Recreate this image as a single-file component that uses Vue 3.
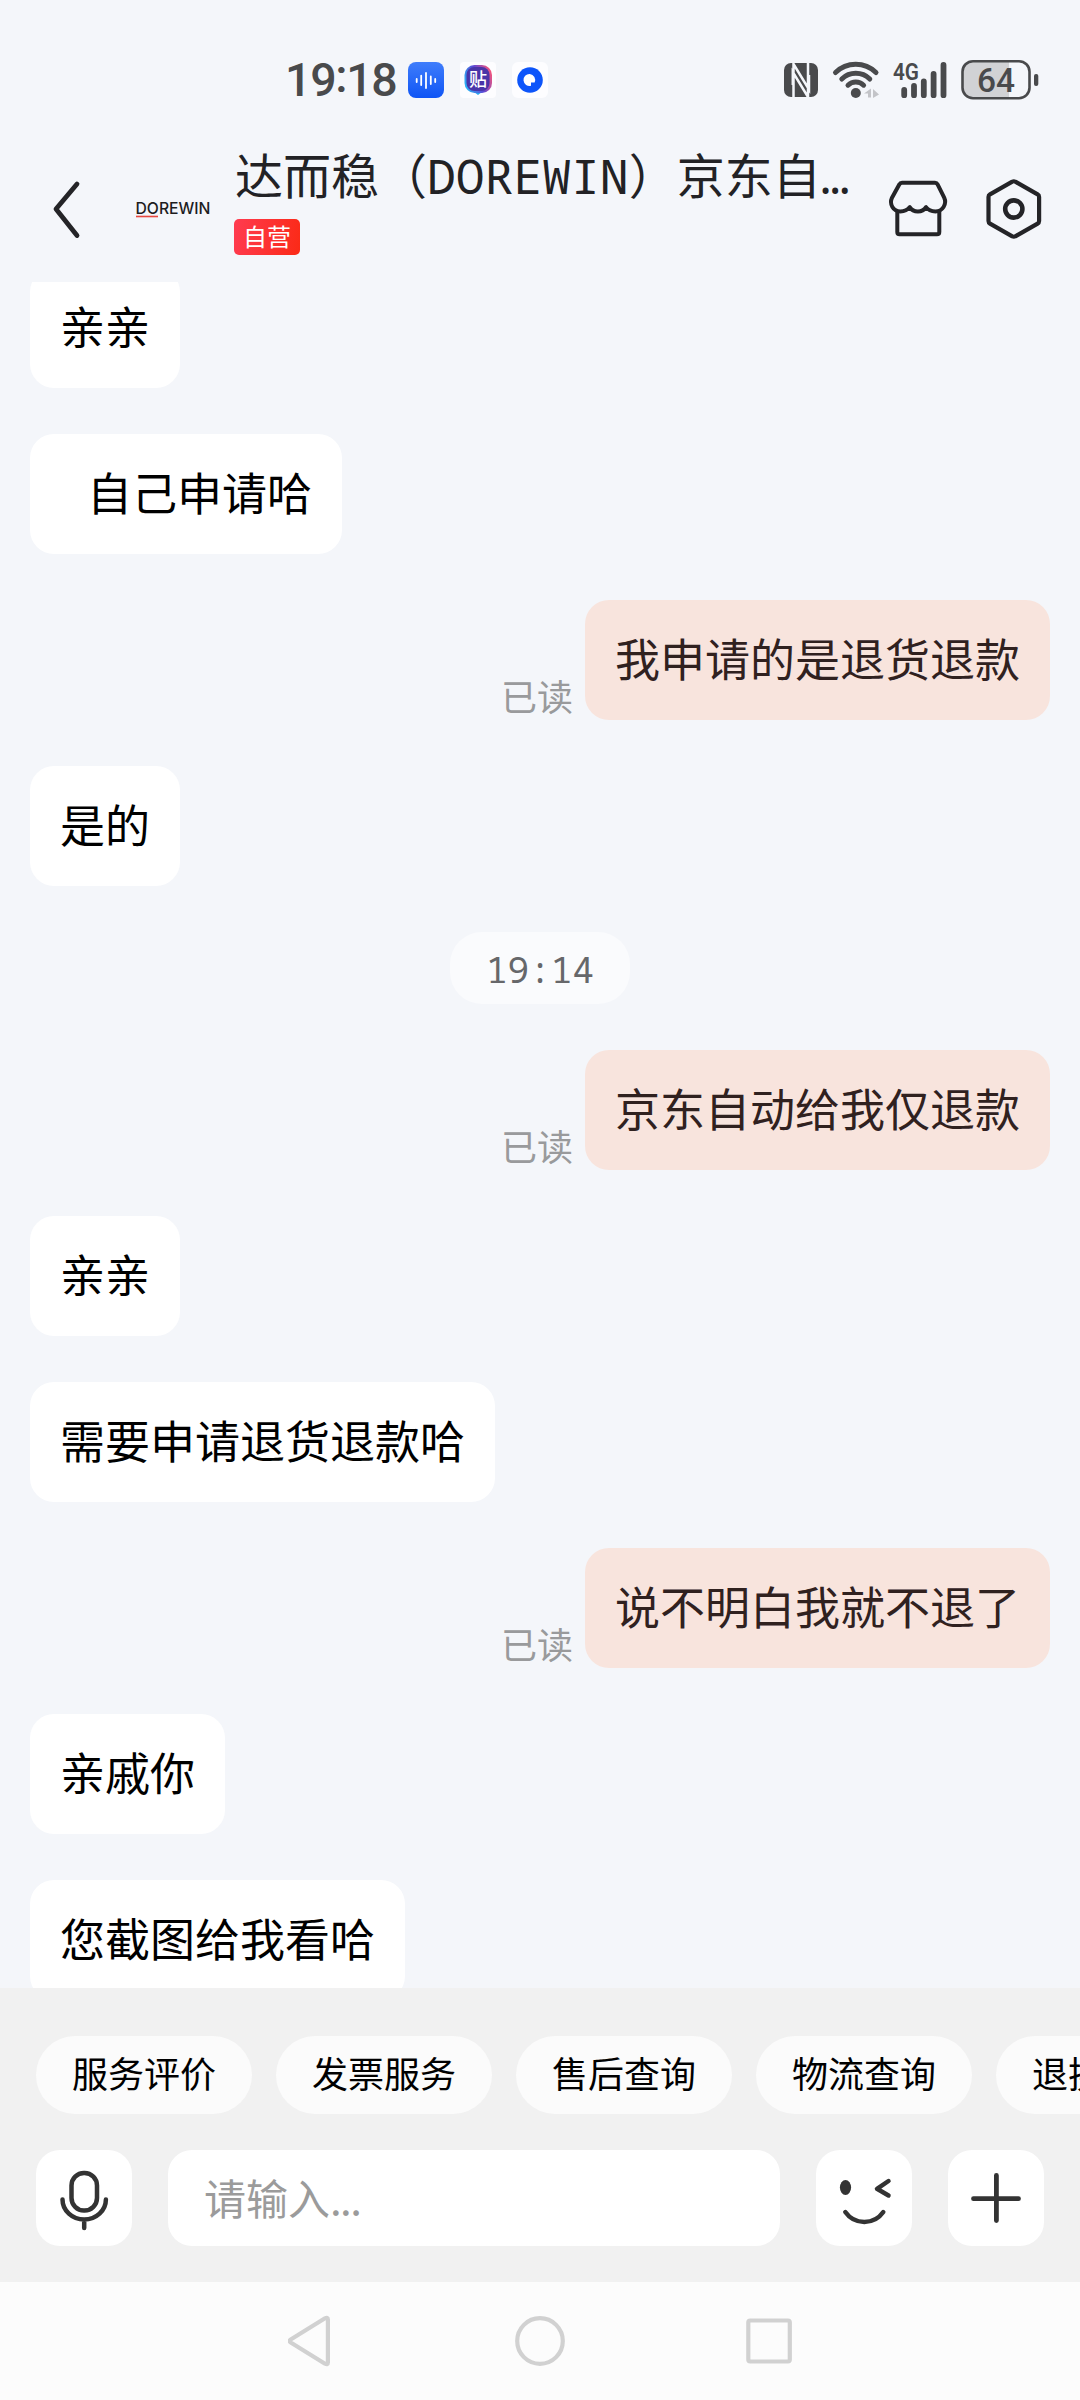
<script setup>
const messages = [
  { id: 1, from: 'peer', text: '亲亲' },
  { id: 2, from: 'peer', text: '自己申请哈', indent: true },
  { id: 3, from: 'me', text: '我申请的是退货退款' },
  { id: 4, from: 'peer', text: '是的' },
  { id: 5, from: 'time', text: '19:14' },
  { id: 6, from: 'me', text: '京东自动给我仅退款' },
  { id: 7, from: 'peer', text: '亲亲' },
  { id: 8, from: 'peer', text: '需要申请退货退款哈' },
  { id: 9, from: 'me', text: '说不明白我就不退了' },
  { id: 10, from: 'peer', text: '亲戚你' },
  { id: 11, from: 'peer', text: '您截图给我看哈' },
]
const chips = ['服务评价', '发票服务', '售后查询', '物流查询', '退换货']
</script>

<template>
  <div class="screen">
    <div class="status">
      <div class="status-left">
        <span class="clock">19<i class="colon">:</i>18</span>
        <svg class="app" width="36" height="36" viewBox="0 0 36 36">
          <defs>
            <linearGradient id="voice" x1="0" y1="0" x2="0" y2="1">
              <stop offset="0" stop-color="#3f7dfb" />
              <stop offset="1" stop-color="#0f55f5" />
            </linearGradient>
          </defs>
          <rect width="36" height="36" rx="8" fill="url(#voice)" />
          <g stroke="#fff" stroke-width="1.8" stroke-linecap="round">
            <path d="M8.7 17v3M13.2 13.7v9.3M18 11v15M22.8 14.5v7.5M27.2 17v3" />
          </g>
        </svg>
        <svg class="app" width="36" height="36" viewBox="0 0 36 36">
          <defs>
            <linearGradient id="tie" x1="0" y1="0.7" x2="1" y2="0.3">
              <stop offset="0" stop-color="#2bb4f5" />
              <stop offset="0.5" stop-color="#5a49d6" />
              <stop offset="1" stop-color="#f5557c" />
            </linearGradient>
          </defs>
          <rect width="36" height="36" rx="4" fill="#fdfdff" />
          <path d="M14 30l4 3 4-3z" fill="#2aa5ee" />
          <rect x="4.5" y="3" width="27.5" height="28" rx="10" fill="url(#tie)" />
          <rect x="6.5" y="5" width="23" height="24" rx="8" fill="#4a35a8" />
          <text x="18" y="24" text-anchor="middle" class="tie-text">贴</text>
        </svg>
        <svg class="app" width="36" height="36" viewBox="0 0 36 36">
          <rect width="36" height="36" rx="6" fill="#fdfdff" />
          <circle cx="18" cy="18" r="12.8" fill="#0d55fa" />
          <path d="M17.8 12a6 6 0 1 0 1.2 11.8v-3.3h3.6a6 6 0 0 0-4.8-8.5z" fill="#fff" />
        </svg>
      </div>
      <svg class="status-right" width="270" height="46" viewBox="776 56 270 46">
        <rect x="784" y="62" width="34" height="34" rx="7" fill="#494a4c" />
        <path d="M793.5 97V63L809 88.5V74M808 61v35L792.8 71V84" fill="none" stroke="#f4f6fa" stroke-width="2.5" />
        <g fill="none" stroke="#494a4c" stroke-width="5" stroke-linecap="round">
          <path d="M835.5 71.5a29 29 0 0 1 40.5 0" />
          <path d="M841.8 78a20 20 0 0 1 28 0" />
          <path d="M848 84.2a11.3 11.3 0 0 1 15.6 0" />
        </g>
        <circle cx="855.8" cy="92" r="5" fill="#494a4c" />
        <path d="M864 92.5l7-5v9h-3v-4zM873 88l6 5.5-6 3.5z" fill="#c3c4c8" />
        <text x="893" y="78.5" class="net" textLength="26" lengthAdjust="spacingAndGlyphs">4G</text>
        <g stroke="#494a4c" stroke-width="5.8" stroke-linecap="round">
          <path d="M904.2 89v5.2M914 85v9.2M923.8 80.5v13.7M933.6 73v21.2M943.5 64v30.2" />
        </g>
        <path d="M973 60h36v37h-36a10 10 0 0 1-10-10V70a10 10 0 0 1 10-10z" fill="#d1d2d5" />
        <rect x="962.5" y="60.2" width="67" height="37" rx="10.5" fill="none" stroke="#494a4c" stroke-width="2.6" />
        <rect x="1034" y="73" width="4.3" height="12" rx="2" fill="#494a4c" />
        <text x="977" y="91" class="level" textLength="38" lengthAdjust="spacingAndGlyphs">64</text>
      </svg>
    </div>

    <header class="header">
      <svg class="back" width="34" height="64" viewBox="50 177 34 64">
        <path d="M77 184L56 209l21 26.5" fill="none" stroke="#242427" stroke-width="4.8" stroke-linecap="round" stroke-linejoin="round" />
      </svg>
      <div class="brand">
        <svg width="90" height="30" viewBox="130 194 90 30">
          <text x="135.5" y="213.8" class="brand-text" textLength="75" lengthAdjust="spacingAndGlyphs">DOREWIN</text>
          <path d="M136 216.5h22" stroke="#e8473f" stroke-width="1.6" />
        </svg>
      </div>
      <div class="shop">
        <div class="title">达而稳（<span class="latin">DOREWIN</span>）京东自<span class="latin">…</span></div>
        <div class="tag">自营</div>
      </div>
      <svg class="actions" width="160" height="66" viewBox="884 176 160 66">
        <g fill="none" stroke="#242427" stroke-width="4" stroke-linejoin="round" stroke-linecap="round">
          <path d="M902 182.7h33q1.8 0 2.6 1.6l6.6 13.4c3 6.5-1.8 13.8-8.7 13.8-4 0-7.5-1.5-9.5-4.3-1.8 2.800-4.500 4.300-8.100 4.300s-6.400-1.500-8.200-4.300c-2 2.800-5.400 4.300-9.400 4.300-7 0-11.300-7.300-8.300-13.800l7.400-13.400q.8-1.600 2.600-1.600z" />
          <path d="M897.300 212v20q0 2.300 2.300 2.300h37.400q2.300 0 2.300-2.300v-20" />
          <path d="M1012.3 181.700q1.500-.9 3 0l22.300 12.600q1.500.9 1.500 2.600v24.200q0 1.700-1.500 2.600l-22.300 12.600q-1.500.9-3 0l-22.300-12.600q-1.500-.9-1.500-2.600v-24.200q0-1.700 1.500-2.600z" stroke-width="4.2" />
          <circle cx="1013.8" cy="209" r="8.6" stroke-width="4.6" />
        </g>
      </svg>
    </header>

    <main class="chat">
      <div v-for="m in messages" :key="m.id" class="row" :class="m.from">
        <span v-if="m.from === 'me'" class="read">已读</span>
        <div class="bubble" :class="{ indent: m.indent }">{{ m.text }}</div>
      </div>
    </main>

    <footer class="composer">
      <div class="chips">
        <div v-for="c in chips" :key="c" class="chip">{{ c }}</div>
      </div>
      <div class="tools">
        <div class="tool">
          <svg width="96" height="96" viewBox="36 2150 96 96" fill="none" stroke="#333" stroke-width="4.5" stroke-linecap="round">
            <rect x="71.5" y="2173" width="25.5" height="37.5" rx="12.5" />
            <path d="M62.5 2199.5a21.7 20 0 0 0 43.4 0M84.2 2220v8" />
          </svg>
        </div>
        <div class="field">请输入<span class="dots">...</span></div>
        <div class="tool">
          <svg width="96" height="96" viewBox="816 2150 96 96" fill="none" stroke="#333" stroke-width="4.5" stroke-linecap="round" stroke-linejoin="round">
            <ellipse cx="845.5" cy="2187.5" rx="5.6" ry="7.6" fill="#333" stroke="none" />
            <path d="M888.5 2181l-11.5 7.800 11.500 6.700M845.300 2212c9.200 13.200 28.800 13.200 38 0" />
          </svg>
        </div>
        <div class="tool">
          <svg width="96" height="96" viewBox="948 2150 96 96" fill="none" stroke="#333" stroke-width="4.8" stroke-linecap="round">
            <path d="M973.5 2198.7h45M996.4 2175.5v45" />
          </svg>
        </div>
      </div>
    </footer>

    <nav class="nav">
      <svg width="504" height="60" viewBox="288 2311 504 60" fill="none" stroke="#d1d1d1" stroke-width="4.2" stroke-linejoin="round">
        <path d="M290.3 2339.8q-1.5 1.2 0 2.4l34.7 21.500q2.900 1.500 2.900-1.200v-43q0-2.700-2.900-1.200z" />
        <circle cx="540" cy="2341" r="22.8" />
        <rect x="748.3" y="2320.5" width="41.5" height="41" rx="2" />
      </svg>
    </nav>
  </div>
</template>

<style>
body {
  margin: 0;
  background: #f4f6fa;
}
</style>

<style scoped>
.screen {
  width: 1080px;
  height: 2400px;
  display: flex;
  flex-direction: column;
  overflow: hidden;
  background: #f4f6fa;
  font-family: "Noto Sans CJK SC", sans-serif;
}
.screen svg {
  display: block;
  flex: none;
}
.status {
  height: 136px;
  box-sizing: border-box;
  padding: 24px 34px 0 285px;
  display: flex;
  align-items: center;
  justify-content: space-between;
}
.status-left {
  display: flex;
  align-items: center;
  gap: 16px;
}
.clock {
  width: 107px;
  white-space: nowrap;
  font: 500 46.5px/58px Roboto, sans-serif;
  letter-spacing: -1.3px;
  color: #494a4c;
}
.colon {
  font-style: normal;
  display: inline-block;
  transform: translateY(-4px);
}
.tie-text {
  font: 500 18px "Noto Sans CJK SC", sans-serif;
  fill: #fff;
}
.net {
  font: 600 24px Roboto, sans-serif;
  fill: #494a4c;
}
.level {
  font: 500 34px Roboto, sans-serif;
  fill: #494a4c;
}
.header {
  height: 146px;
  flex: none;
  box-sizing: border-box;
  padding-left: 50px;
  display: flex;
  align-items: center;
}
.brand {
  margin-left: 46px;
}
.brand-text {
  font: 500 16px Inter, sans-serif;
  fill: #1d1d1f;
}
.shop {
  align-self: flex-start;
  width: 628px;
  margin: 6px 0 0 14px;
  display: flex;
  flex-direction: column;
  align-items: flex-start;
}
.title {
  height: 66px;
  margin-left: 1px;
  line-height: 63px;
  font-size: 48px;
  color: #222225;
  white-space: nowrap;
}
.latin {
  font-family: "Noto Sans Mono", "DejaVu Sans Mono", monospace;
}
.tag {
  margin-top: 11px;
  padding: 0 9px;
  height: 36px;
  line-height: 34px;
  border-radius: 5px;
  font-size: 24px;
  color: #fff;
  background: linear-gradient(100deg, #ff3b50, #fb2a16);
}
.actions {
  margin-left: 22px;
}
.chat {
  height: 1706px;
  flex: none;
  overflow: hidden;
  box-sizing: border-box;
  padding: 0 30px;
  display: flex;
  flex-direction: column;
  gap: 46px;
}
.row {
  display: flex;
  align-items: flex-end;
  flex: none;
}
.row:first-child {
  margin-top: -14px;
}
.row.me {
  justify-content: flex-end;
}
.row.time {
  justify-content: center;
}
.bubble {
  height: 120px;
  box-sizing: border-box;
  padding: 0 30px;
  border-radius: 24px;
  line-height: 115px;
  font-size: 45px;
  color: #000;
  background: #fff;
  white-space: nowrap;
}
.bubble.indent {
  padding-left: 57px;
}
.me .bubble {
  color: #30211f;
  background: #f8e4dd;
}
.time .bubble {
  height: 72px;
  padding: 0 36px;
  border-radius: 32px;
  font: 36px/75px "Noto Sans Mono", "DejaVu Sans Mono", monospace;
  color: #66676a;
  background: #fafbfd;
}
.read {
  margin: 0 12px 0 0;
  height: 50px;
  line-height: 50px;
  font-size: 36px;
  color: #999a9c;
}
.composer {
  height: 294px;
  flex: none;
  box-sizing: border-box;
  padding: 48px 0 0 36px;
  background: #f1f1f1;
}
.chips {
  display: flex;
  gap: 24px;
  overflow: hidden;
}
.chip {
  flex: none;
  height: 78px;
  padding: 0 36px;
  line-height: 73px;
  border-radius: 39px;
  font-size: 36px;
  color: #000;
  background: #fbfbfb;
}
.tools {
  margin-top: 36px;
  display: flex;
  gap: 36px;
}
.tool {
  width: 96px;
  height: 96px;
  border-radius: 24px;
  background: #fff;
}
.field {
  width: 612px;
  height: 96px;
  box-sizing: border-box;
  padding-left: 36px;
  border-radius: 24px;
  line-height: 93px;
  font-size: 42px;
  color: #9b9b9b;
  background: #fff;
}
.dots {
  letter-spacing: -1.6px;
}
.nav {
  flex: 1;
  display: flex;
  justify-content: center;
  align-items: center;
  background: #fcfcfc;
}
</style>
